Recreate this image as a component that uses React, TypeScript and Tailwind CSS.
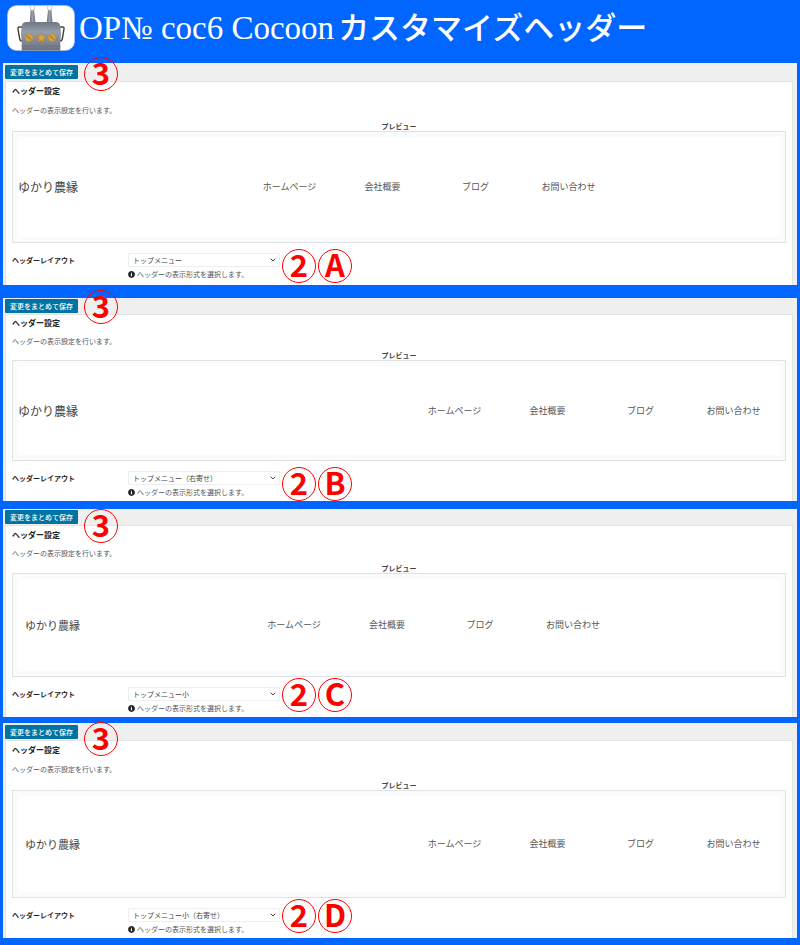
import React, { useState } from 'react';
import { ChevronDown } from 'lucide-react';
import { FaInfoCircle } from 'react-icons/fa';

interface PanelConfig {
  id: string;
  layout: string;
  wrapper: string;
  bar: string;
  stepBadge: string;
  title: string;
  description: string;
  caption: string;
  preview: string;
  logo: string;
  nav: string;
  badges: string;
}

const layouts = [
  'トップメニュー',
  'トップメニュー（右寄せ）',
  'トップメニュー小',
  'トップメニュー小（右寄せ）',
];

const menuItems = ['ホームページ', '会社概要', 'ブログ', 'お問い合わせ'];

const panels: PanelConfig[] = [
  {
    id: 'A',
    layout: layouts[0],
    wrapper: '',
    bar: 'h-[18px]',
    stepBadge: '-top-1.5',
    title: 'pt-1',
    description: 'mt-[9px]',
    caption: 'mt-1.5',
    preview: 'h-28',
    logo: 'text-[12px]',
    nav: 'justify-center',
    badges: 'pt-1.5 pb-0.5',
  },
  {
    id: 'B',
    layout: layouts[1],
    wrapper: 'mt-[13px]',
    bar: 'h-4',
    stepBadge: '-top-2',
    title: 'pt-[3px]',
    description: 'mt-2',
    caption: 'mt-1',
    preview: 'h-[101px]',
    logo: 'text-[12px]',
    nav: 'justify-end',
    badges: 'pt-1.5',
  },
  {
    id: 'C',
    layout: layouts[2],
    wrapper: 'mt-2',
    bar: 'h-4',
    stepBadge: 'top-0',
    title: 'pt-1',
    description: 'mt-2',
    caption: 'mt-[5px]',
    preview: 'h-[104px]',
    logo: 'px-[7px] text-[11px]',
    nav: 'justify-center',
    badges: 'pt-px',
  },
  {
    id: 'D',
    layout: layouts[3],
    wrapper: 'mt-1.5',
    bar: 'h-[17px]',
    stepBadge: '-top-px',
    title: 'pt-1',
    description: 'mt-[9px]',
    caption: 'mt-1.5',
    preview: 'h-[108px]',
    logo: 'px-[7px] text-[11px]',
    nav: 'justify-end',
    badges: 'pt-px',
  },
];

const BoilerIcon: React.FC = () => (
  <svg viewBox="0 0 68 46" className="w-[68px] h-[46px] shrink-0" aria-hidden="true">
    <defs>
      <linearGradient id="tank" x1="0" y1="0" x2="0" y2="1">
        <stop offset="0" stopColor="#6f7783" />
        <stop offset="0.35" stopColor="#959daa" />
        <stop offset="0.75" stopColor="#7d8592" />
        <stop offset="1" stopColor="#6b7380" />
      </linearGradient>
      <linearGradient id="pipe" x1="0" y1="0" x2="1" y2="0">
        <stop offset="0" stopColor="#666d79" />
        <stop offset="0.5" stopColor="#98a0ac" />
        <stop offset="1" stopColor="#666d79" />
      </linearGradient>
    </defs>
    <rect x="0.5" y="0.5" width="67" height="45" rx="9" fill="#fff" stroke="#b5c3dc" strokeWidth="0.6" />
    <path d="M15 22h-2.500q-1.800 0-1.500 1.800l1.700 10.200q.4 2 2.300 2M53 22h2.500q1.800 0 1.500 1.800l-1.700 10.200q-.4 2-2.300 2" fill="none" stroke="#4a3c3a" strokeWidth="1.400" />
    <path d="M23.700 5h3.400l1.500 14h-6z" fill="url(#pipe)" />
    <path d="M41 5h3.400l1.200 14h-6z" fill="url(#pipe)" />
    <circle cx="25.400" cy="2.900" r="2.400" fill="#fff" stroke="#cbc2c0" strokeWidth="0.900" />
    <circle cx="42.700" cy="2.900" r="2.400" fill="#fff" stroke="#cbc2c0" strokeWidth="0.900" />
    <path d="M19 17h30q3.500 0 4.300 4l.7 8-.7 8v8.400H14.700V37l-.7-8 .7-8q.8-4 4.300-4z" fill="url(#tank)" />
    <path d="M14.700 41h38.600" stroke="#6a717d" strokeWidth="0.6" />
    <circle cx="22" cy="32.700" r="4" fill="#d3a041" stroke="#a8854a" strokeWidth="0.5" />
    <path d="M19.400 30.500l5.200 4.400" stroke="#94702f" strokeWidth="1" />
    <path d="M34.300 27.500l1.400 3.600 3.900.2-3 2.500 1 3.800-3.300-2.100-3.300 2.100 1-3.800-3-2.500 3.900-.2z" fill="#d9a43c" stroke="#a0722c" strokeWidth="0.400" />
    <circle cx="45" cy="32.700" r="4" fill="#d3a041" stroke="#a8854a" strokeWidth="0.5" />
    <path d="M42.400 30.500l5.200 4.400" stroke="#94702f" strokeWidth="1" />
  </svg>
);

const Badge: React.FC<{ children: React.ReactNode }> = ({ children }) => (
  <span className="flex size-[34px] shrink-0 items-center justify-center rounded-full border border-[#ff0000] pb-1 text-[31px] leading-[30px] font-bold text-[#ff0000]">
    {children}
  </span>
);

const SettingsPanel: React.FC<{ panel: PanelConfig }> = ({ panel }) => {
  const [layout, setLayout] = useState(panel.layout);
  const selectId = `header-layout-${panel.id}`;

  return (
    <section className={`relative bg-[#efefef] ${panel.wrapper}`}>
      {/* Save bar */}
      <div className={`flex items-center pl-0.5 ${panel.bar}`}>
        <button
          type="button"
          className="h-[14px] w-[73px] rounded-[1px] bg-[#0073a2] text-center text-[7px] leading-[14px] font-medium whitespace-nowrap text-white"
        >
          変更をまとめて保存
        </button>
      </div>
      <div className={`absolute left-[81px] ${panel.stepBadge}`}>
        <Badge>3</Badge>
      </div>

      <div className="mr-1 ml-0.5 border-x border-t border-[#e3e3e3] bg-white px-1.5">
        <h2 className={`text-[8px] leading-[10px] font-bold text-[#222222] ${panel.title}`}>ヘッダー設定</h2>
        <p className={`text-[7px] leading-[10px] text-[#555555] ${panel.description}`}>
          ヘッダーの表示設定を行います。
        </p>

        {/* Preview */}
        <p className={`text-center text-[7px] leading-[10px] font-bold text-[#444444] ${panel.caption}`}>プレビュー</p>
        <div className={`border border-[#dfe1e2] bg-[#f9fbfc] p-[5px] ${panel.preview}`}>
          <div className="flex h-full items-center bg-white">
            <span className={`shrink-0 leading-4 text-[#444444] ${panel.logo}`}>ゆかり農縁</span>
            <nav className={`flex flex-1 ${panel.nav}`}>
              {menuItems.map((item) => (
                <a key={item} href="#" className="w-[93px] text-center text-[9px] leading-4 text-[#555555]">
                  {item}
                </a>
              ))}
            </nav>
          </div>
        </div>

        {/* Layout select */}
        <div className="flex min-h-10 items-start">
          <label
            htmlFor={selectId}
            className="mt-2.5 w-[116px] shrink-0 text-[7px] leading-[14px] font-bold text-[#222222]"
          >
            ヘッダーレイアウト
          </label>
          <div className="mt-2.5 mr-0.5 w-[152px] shrink-0">
            <div className="relative">
              <select
                id={selectId}
                value={layout}
                onChange={(e) => setLayout(e.target.value)}
                className="block h-[14px] w-full appearance-none rounded-[1px] border border-[#eeeeee] bg-white pl-1 text-[7px] leading-3 text-[#444444]"
              >
                {layouts.map((name) => (
                  <option key={name}>{name}</option>
                ))}
              </select>
              <ChevronDown
                className="pointer-events-none absolute top-[3px] right-[3px] size-2 text-[#444444]"
                strokeWidth={3}
              />
            </div>
            <p className="mt-0.5 flex items-center gap-0.5 text-[7px] leading-[10px] whitespace-nowrap text-[#555555]">
              <FaInfoCircle className="size-[7px] text-[#222222]" />
              ヘッダーの表示形式を選択します。
            </p>
          </div>
          <div className={`flex gap-0.5 ${panel.badges}`}>
            <Badge>2</Badge>
            <Badge>{panel.id}</Badge>
          </div>
        </div>
      </div>
    </section>
  );
};

const App: React.FC = () => (
  <div className="min-h-screen bg-[#0066ff] font-['Noto_Sans_CJK_JP',sans-serif]">
    <header className="flex items-center gap-1 pt-[5px] pr-2 pb-3 pl-[7px]">
      <BoilerIcon />
      <h1 className="font-['Liberation_Serif',serif] text-[33px] leading-[46px] whitespace-nowrap text-white">
        OP№ coc6 Cocoon
        <span className="ml-1 font-['Noto_Sans_CJK_JP',sans-serif] text-[31px] leading-10 font-medium">
          カスタマイズヘッダー
        </span>
      </h1>
    </header>
    <main className="px-[3px] pb-[7px]">
      {panels.map((panel) => (
        <SettingsPanel key={panel.id} panel={panel} />
      ))}
    </main>
  </div>
);

export default App;
